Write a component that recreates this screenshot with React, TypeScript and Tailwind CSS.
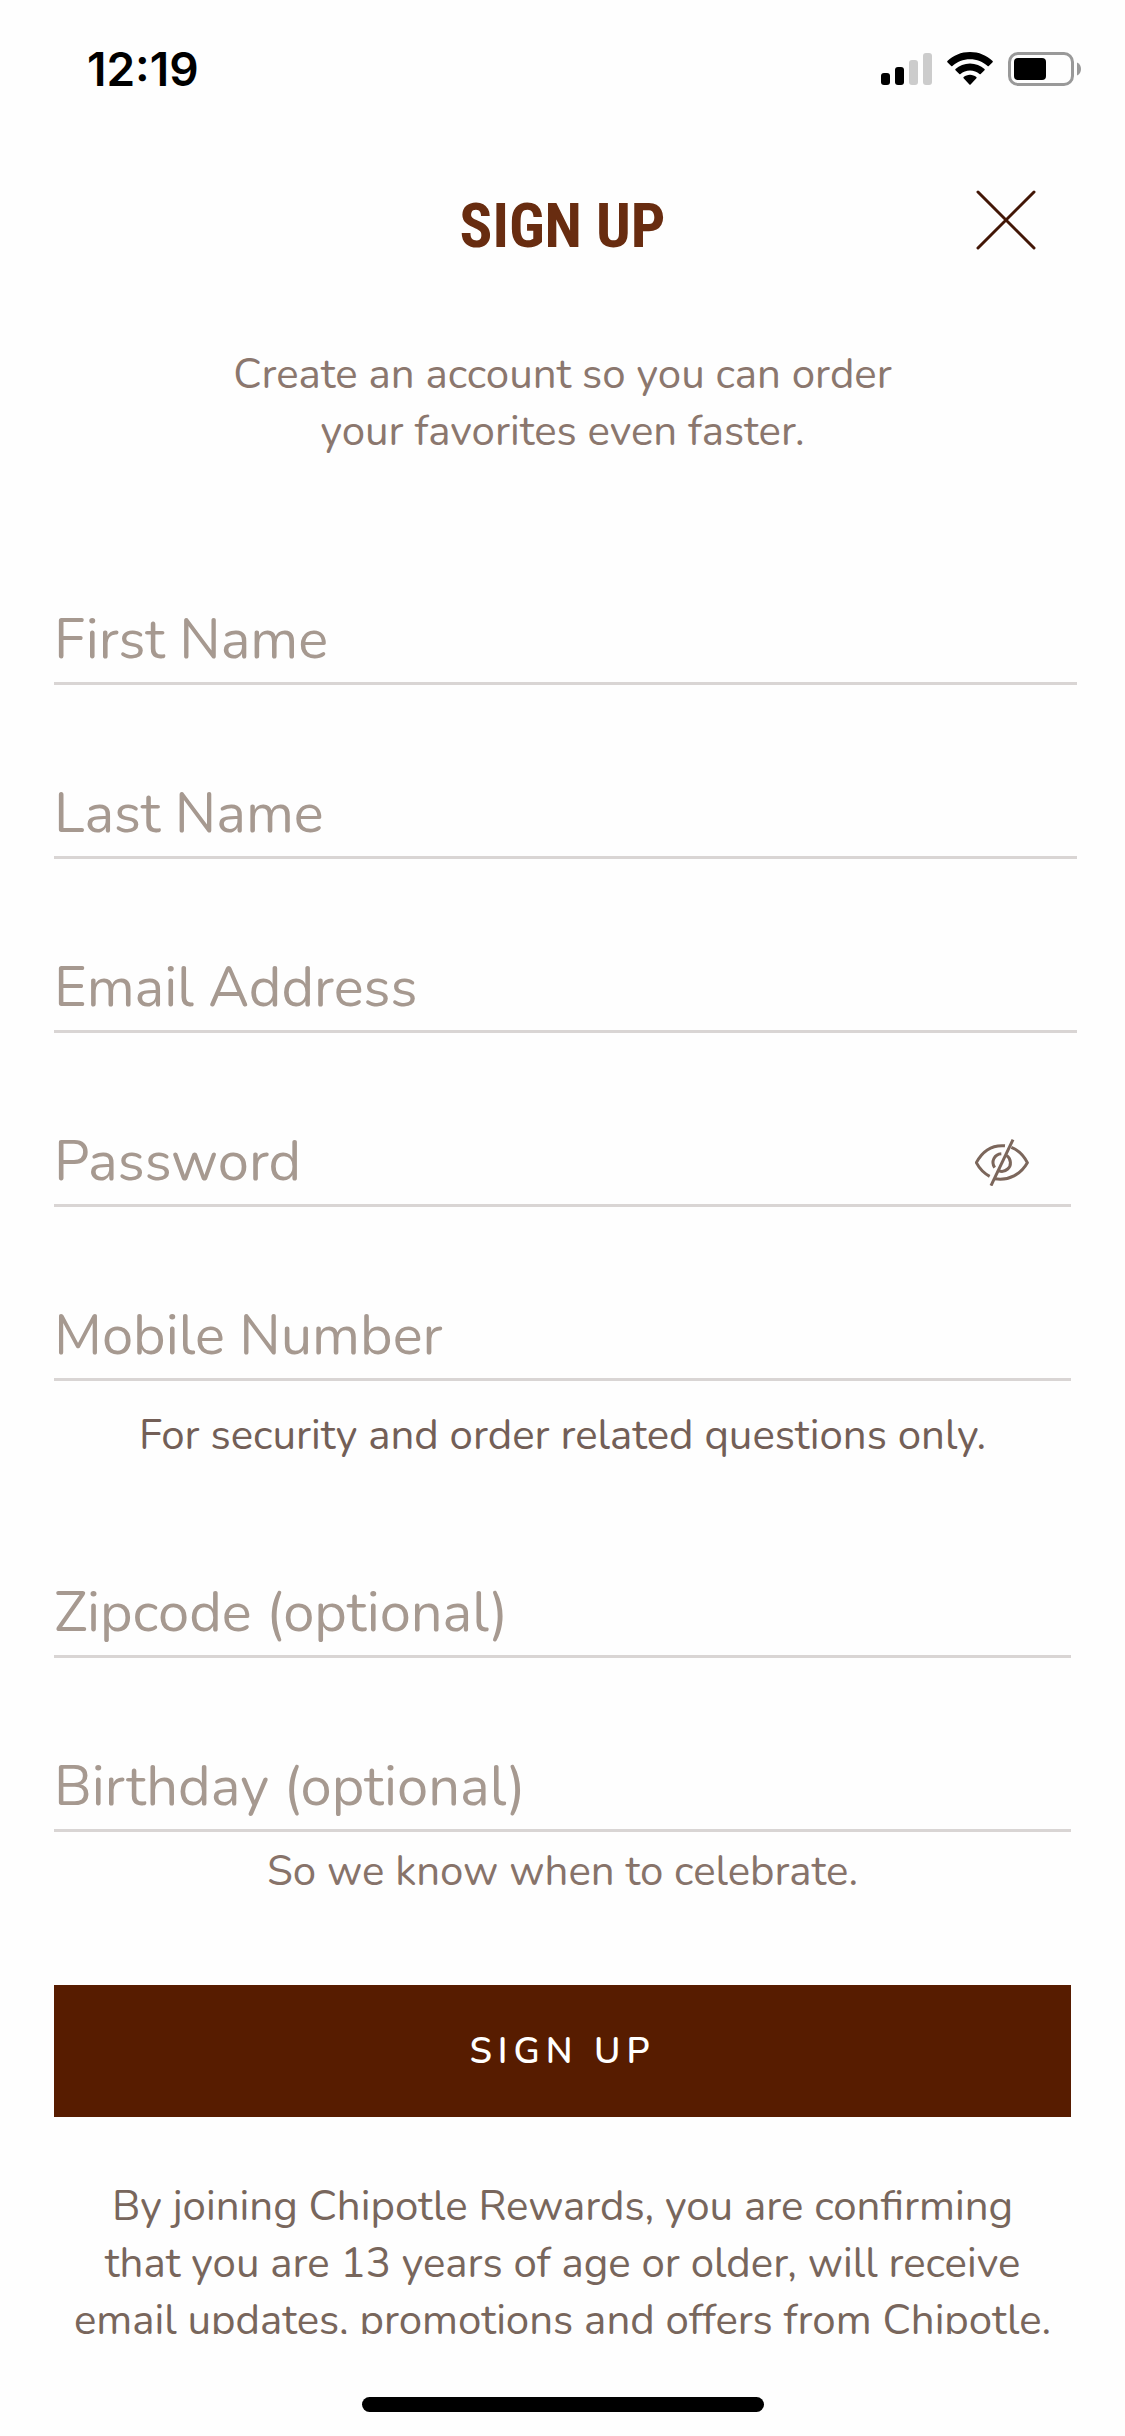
import { useState } from "react";
import type { HTMLInputTypeAttribute, ReactNode } from "react";

function StatusBar() {
  return (
    <div className="flex h-[138px] shrink-0 items-center justify-between pr-11 pl-[87px]">
      <time className="font-['Inter',sans-serif] text-[46px] leading-none font-semibold text-black">12:19</time>
      <div className="flex items-center gap-[15px]">
        <svg className="h-[34px] w-[51px]" viewBox="0 0 51 34" aria-label="Signal: two of four bars">
          <rect x="0" y="21" width="9" height="12" rx="3" fill="#000" />
          <rect x="14" y="15" width="9" height="18" rx="3" fill="#000" />
          <rect x="28" y="8" width="9" height="25" rx="3" fill="#ccc" />
          <rect x="42" y="1" width="9" height="32" rx="3" fill="#ccc" />
        </svg>
        <svg className="h-[34px] w-[46px]" viewBox="0 0 46 34" aria-label="Wi-Fi">
          <path d="M23 0C14.200 0 6.200 3.400 .4 9Q-.1 9.600 .4 10.200L4.200 14Q4.800 14.500 5.400 14C10 9.700 16.200 7.200 23 7.200S36 9.700 40.600 14Q41.200 14.500 41.800 14L45.600 10.200Q46.100 9.600 45.600 9C39.800 3.400 31.800 0 23 0Z" />
          <path d="M23 11.500C17.400 11.500 12.300 13.600 8.500 17.100Q7.900 17.700 8.500 18.300L12.300 22Q12.900 22.500 13.500 22C16 19.800 19.400 18.500 23 18.500S30 19.800 32.500 22Q33.100 22.500 33.700 22L37.500 18.300Q38.100 17.700 37.500 17.100C33.700 13.600 28.600 11.500 23 11.500Z" />
          <path d="M23 22.800C20.600 22.800 18.400 23.700 16.700 25.100Q16 25.700 16.600 26.300L22.400 32.400Q23 33 23.600 32.400L29.400 26.300Q30 25.700 29.300 25.100C27.600 23.700 25.400 22.800 23 22.800Z" />
        </svg>
        <svg className="h-[34px] w-[73px]" viewBox="0 0 73 34" aria-label="Battery">
          <rect x="1.500" y="1.500" width="63" height="31" rx="8.500" fill="none" stroke="#999" strokeWidth="3" />
          <rect x="6" y="6" width="32" height="22" rx="4" fill="#000" />
          <path d="M69 10.500C71.600 11.600 73 14.100 73 17S71.600 22.400 69 23.500Z" fill="#999" />
        </svg>
      </div>
    </div>
  );
}

function HiddenEyeIcon() {
  return (
    <svg className="h-[47px] w-[54px]" viewBox="105 85 162 141" fill="none" stroke="#7b665b" strokeWidth="9" aria-hidden="true">
      <path d="M195 105.500C155 102 126 124 109 156C119 175 132 188 149 197" />
      <path d="M214 110C237 119 252 136 262 156C243 190 207 211 164 204" />
      <path d="M184 129.500C163 131 152 153 164 171" />
      <path d="M200 134C214 145 215 165 203 175C195 182 185 184 176 180" />
      <path d="M219 87L153 225" />
    </svg>
  );
}

type FieldProps = {
  id: string;
  label: string;
  type?: HTMLInputTypeAttribute;
  wide?: boolean;
  children?: ReactNode;
};

function Field({ id, label, type = "text", wide = false, children }: FieldProps) {
  return (
    <div className={`flex h-[87px] items-center border-b-[3px] border-[#d9d5d4] ${wide ? "-mr-1.5" : ""}`}>
      <div className="grid h-full min-w-0 flex-1 items-center text-left text-[56px] leading-[78px]">
        <input
          id={id}
          type={type}
          placeholder=" "
          className="peer col-start-1 row-start-1 h-full w-full min-w-0 bg-transparent text-[#5a3a2c] outline-none"
        />
        <label
          htmlFor={id}
          className="invisible col-start-1 row-start-1 cursor-text text-[#a69990] peer-placeholder-shown:visible"
        >
          {label}
        </label>
      </div>
      {children}
    </div>
  );
}

export default function App() {
  const [visible, setVisible] = useState(false);
  return (
    <div className="flex h-screen flex-col overflow-hidden bg-[#fefefe] font-['Nunito','Lato',sans-serif] font-normal">
      <StatusBar />
      <header className="grid h-[172px] shrink-0 grid-cols-[1fr_auto_1fr] items-center">
        <h1 className="col-start-2 pt-1 font-['Roboto_Condensed','Roboto',sans-serif] text-[61px] leading-none font-bold text-[#682c10]">SIGN UP</h1>
        <button type="button" aria-label="Close" className="mr-[89px] mb-2 justify-self-end">
          <svg className="size-[60px]" viewBox="0 0 60 60" fill="none" stroke="#421606" strokeWidth="3" strokeLinecap="round">
            <path d="M2 2L58 58M58 2L2 58" />
          </svg>
        </button>
      </header>
      <main className="min-h-0 flex-1 overflow-hidden px-[54px] pt-9 text-center text-[42px] leading-[57px]">
        <p className="text-[#8b776e]">
          Create an account so you can order
          <br />
          your favorites even faster.
        </p>
        <form className="mt-[138px]" onSubmit={(e) => e.preventDefault()}>
          <div className="flex flex-col gap-[87px]">
            <Field id="first-name" label="First Name" wide />
            <Field id="last-name" label="Last Name" wide />
            <Field id="email" label="Email Address" type="email" wide />
            <Field id="password" label="Password" type={visible ? "text" : "password"}>
              <button type="button" aria-label="Show password" aria-pressed={visible} onClick={() => setVisible(!visible)} className="mr-[42px]">
                <HiddenEyeIcon />
              </button>
            </Field>
            <Field id="mobile" label="Mobile Number" type="tel" />
          </div>
          <p className="mt-[26px] text-[#735f57]">For security and order related questions only.</p>
          <div className="mt-[107px] flex flex-col gap-[87px]">
            <Field id="zipcode" label="Zipcode (optional)" />
            <Field id="birthday" label="Birthday (optional)" />
          </div>
          <p className="mt-[11px] text-[#87736a]">So we know when to celebrate.</p>
          <button type="submit" className="mt-[85px] h-[132px] w-full bg-[#571c00] text-[36px] font-semibold tracking-[6px] text-white">
            SIGN UP
          </button>
        </form>
        <p className="mt-[61px] text-[#78665c]">
          By joining Chipotle Rewards, you are confirming
          <br />
          that you are 13 years of age or older, will receive
          <br />
          email updates, promotions and offers from Chipotle.
        </p>
      </main>
      <footer className="flex h-[102px] shrink-0 items-end justify-center pb-6">
        <div className="h-[15px] w-[402px] rounded-full bg-black" />
      </footer>
    </div>
  );
}
